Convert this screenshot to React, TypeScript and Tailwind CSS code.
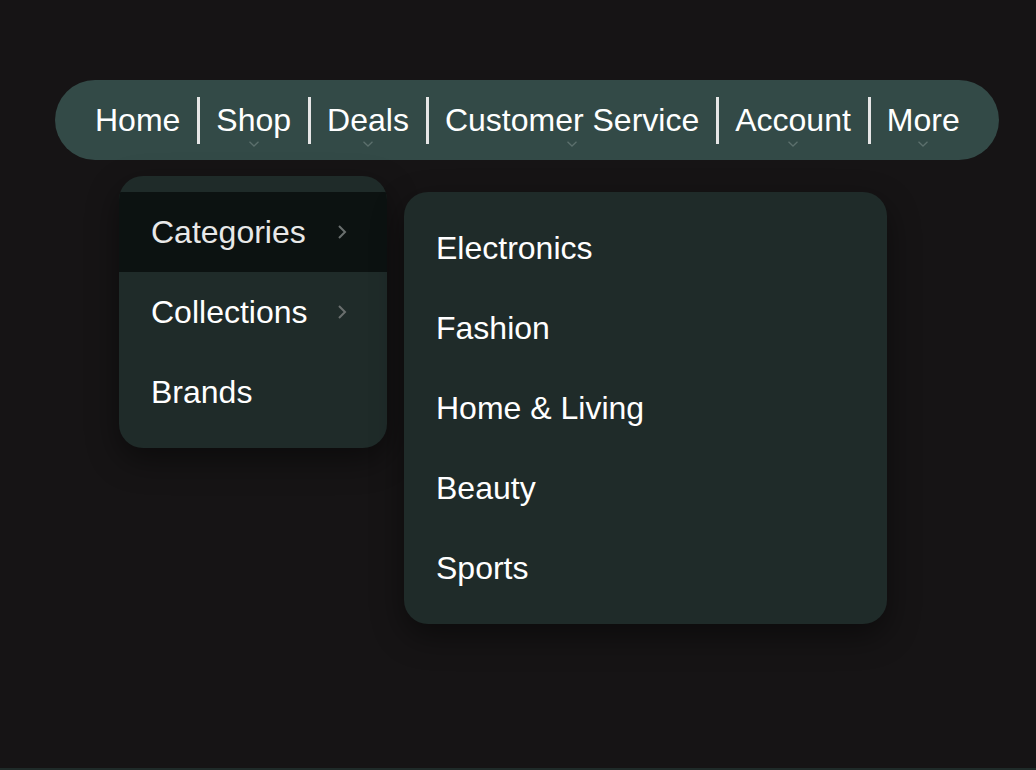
const NAV = [
  { label: 'Home', caret: false },
  { label: 'Shop', caret: true },
  { label: 'Deals', caret: true },
  { label: 'Customer Service', caret: true },
  { label: 'Account', caret: true },
  { label: 'More', caret: true },
];

const MENU = [
  { label: 'Categories', sub: true, active: true },
  { label: 'Collections', sub: true, active: false },
  { label: 'Brands', sub: false, active: false },
];

const CATEGORIES = ['Electronics', 'Fashion', 'Home & Living', 'Beauty', 'Sports'];

const Caret = () => (
  <svg width="11" height="6" viewBox="0 0 11 6" fill="none" className="absolute left-1/2 -translate-x-1/2 top-[calc(100%+2px)]">
    <path d="M1 0.8L5.5 5L10 0.8" stroke="#5b6f6c" strokeWidth="1.3" />
  </svg>
);

const Chevron = () => (
  <svg width="10" height="16" viewBox="0 0 10 16" fill="none">
    <path d="M2 2L8 8L2 14" stroke="#6a6f6e" strokeWidth="2" />
  </svg>
);

export default function App() {
  return (
    <div className="w-full min-h-[770px] flex flex-col bg-[#161415] text-white" style={{ fontFamily: '"Liberation Sans", Arial, sans-serif' }}>
      <div className="flex-1 h-[768px] pt-20 pl-[55px]">
        {/* Top nav */}
        <nav className="inline-flex items-center h-20 pl-6 pr-[22px] rounded-full bg-[#334a47]">
          {NAV.map((n, i) => (
            <div key={n.label} className="flex items-center">
              {i > 0 && <span className="w-[3px] h-[47px] bg-[#e6e6e6]"></span>}
              <div className="pl-4 pr-[17px]">
                <span className="relative block text-[32px] leading-[37px] text-white">
                  {n.label}
                  {n.caret && <Caret />}
                </span>
              </div>
            </div>
          ))}
        </nav>

        {/* Menus */}
        <div className="flex items-start gap-[17px] mt-4 pl-16">
          <div className="w-[268px] py-4 rounded-3xl bg-[#1f2b29] shadow-[0_12px_32px_rgba(0,0,0,0.45)] overflow-hidden">
            {MENU.map(m => (
              <div
                key={m.label}
                className={`h-20 flex items-center justify-between pl-8 pr-10 text-[32px] ${m.active ? 'bg-[#0c1211] text-[#e8e8e8]' : 'text-white'}`}
              >
                <span>{m.label}</span>
                {m.sub && <Chevron />}
              </div>
            ))}
          </div>

          <div className="w-[483px] mt-4 py-4 rounded-3xl bg-[#1f2b29] shadow-[0_12px_32px_rgba(0,0,0,0.45)]">
            {CATEGORIES.map(c => (
              <div key={c} className="h-20 flex items-center pl-8 text-[32px] text-white">
                {c}
              </div>
            ))}
          </div>
        </div>
      </div>
      <div className="h-[2px] bg-[#1f2b29]"></div>
    </div>
  );
}
